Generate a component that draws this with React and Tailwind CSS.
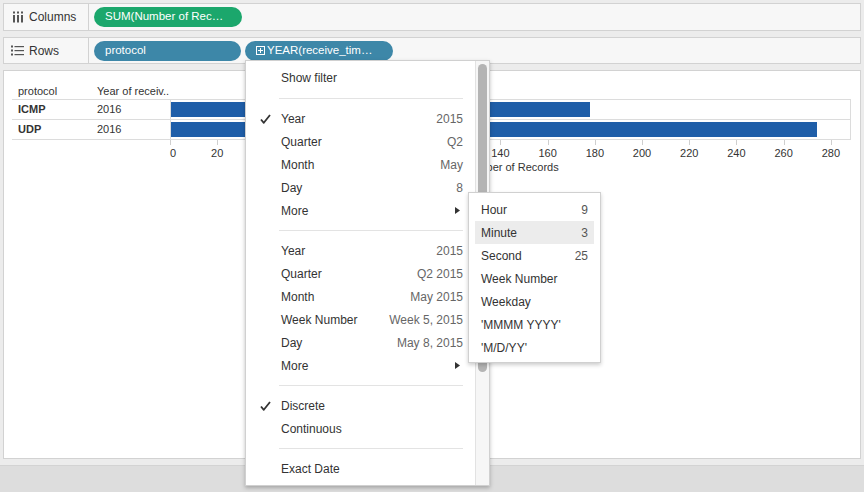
import React from 'react';

const font = "font-['Liberation_Sans',Arial,sans-serif]";

const rows = [
  { protocol: 'ICMP', year: '2016', records: 177.5 },
  { protocol: 'UDP', year: '2016', records: 273.8 },
];

const ticks = [0, 20, 40, 60, 80, 100, 120, 140, 160, 180, 200, 220, 240, 260, 280];
const PX_PER_UNIT = 2.36;

const ColumnsIcon = () => (
  <svg width="12" height="12" viewBox="0 0 12 12" className="text-[#555]">
    <rect x="1" y="0.5" width="2" height="2" fill="currentColor" />
    <rect x="5" y="0.5" width="2" height="2" fill="currentColor" />
    <rect x="9" y="0.5" width="2" height="2" fill="currentColor" />
    <rect x="1" y="4" width="2" height="7.5" fill="currentColor" />
    <rect x="5" y="4" width="2" height="7.5" fill="currentColor" />
    <rect x="9" y="4" width="2" height="7.5" fill="currentColor" />
  </svg>
);

const RowsIcon = () => (
  <svg width="13" height="11" viewBox="0 0 13 11" className="text-[#555]">
    <rect x="0" y="0.5" width="2" height="2" fill="currentColor" />
    <rect x="0" y="4.5" width="2" height="2" fill="currentColor" />
    <rect x="0" y="8.5" width="2" height="2" fill="currentColor" />
    <rect x="3.5" y="1" width="9.5" height="1.2" fill="currentColor" />
    <rect x="3.5" y="5" width="9.5" height="1.2" fill="currentColor" />
    <rect x="3.5" y="9" width="9.5" height="1.2" fill="currentColor" />
  </svg>
);

const PlusBox = () => (
  <svg width="9" height="9" viewBox="0 0 9 9" className="mr-[2px] shrink-0">
    <rect x="0.5" y="0.5" width="8" height="8" fill="none" stroke="white" strokeWidth="1" />
    <path d="M2 4.5h5M4.5 2v5" stroke="white" strokeWidth="1" />
  </svg>
);

const Check = () => (
  <svg width="11" height="10" viewBox="0 0 11 10" className="absolute left-[14px] top-[7px]">
    <path d="M1 5.5 L3.8 8.8 L10 1" fill="none" stroke="#333" strokeWidth="1.8" strokeLinejoin="round" />
  </svg>
);

const Arrow = () => (
  <svg width="5" height="7" viewBox="0 0 5 7">
    <path d="M0 0 L5 3.5 L0 7 Z" fill="#333" />
  </svg>
);

const Pill = ({ color, width, children }) => (
  <div className={`${color} ${width} h-[20px] rounded-full flex items-center px-[11px] text-white text-[11.5px] whitespace-nowrap overflow-hidden`}>
    {children}
  </div>
);

const MenuItem = ({ label, value, checked, more }) => (
  <div className="relative h-[23px] flex items-center justify-between pl-[35px] pr-[12px]">
    {checked && <Check />}
    <span className="text-[#333]">{label}</span>
    {value && <span className="text-[#666]">{value}</span>}
    {more && <span className="mr-[3px] flex"><Arrow /></span>}
  </div>
);

const Sep = ({ tight }) => (
  <div className={`${tight ? 'mt-[8px]' : 'mt-[9px]'} mb-[8px] ml-[33px] mr-[12px] h-px bg-[#e3e3e3]`} />
);

const SubItem = ({ label, value, active }) => (
  <div className={`h-[23px] mx-[6px] px-[6px] flex items-center justify-between ${active ? 'bg-[#ececec]' : ''}`}>
    <span className="text-[#333]">{label}</span>
    {value && <span className="text-[#555]">{value}</span>}
  </div>
);

export default function App() {
  return (
    <div className={`${font} relative w-[864px] h-[492px] bg-[#ececec] overflow-hidden text-[12px] text-[#333]`}>
      <div className="px-[3px] pt-[3px]">
        {/* Columns shelf */}
        <div className="h-[28px] border border-[#d2d2d2] bg-[#f7f7f7] flex items-center">
          <div className="w-[85px] h-full border-r border-[#d2d2d2] flex items-center gap-[5px] pl-[8px]">
            <ColumnsIcon />
            <span>Columns</span>
          </div>
          <div className="ml-[5px]">
            <Pill color="bg-[#1ba76c]" width="w-[148px]">SUM(Number of Rec…</Pill>
          </div>
        </div>

        {/* Rows shelf */}
        <div className="mt-[6px] h-[27px] border border-[#d2d2d2] bg-[#f7f7f7] flex items-center">
          <div className="w-[85px] h-full border-r border-[#d2d2d2] flex items-center gap-[5px] pl-[7px]">
            <RowsIcon />
            <span>Rows</span>
          </div>
          <div className="ml-[5px] flex gap-[4px]">
            <Pill color="bg-[#3d87a8]" width="w-[147px]">protocol</Pill>
            <Pill color="bg-[#3d87a8]" width="w-[148px]">
              <PlusBox />
              YEAR(receive_tim…
            </Pill>
          </div>
        </div>

        {/* View */}
        <div className="mt-[6px] h-[389px] border border-[#d2d2d2] bg-white pl-[8px] pt-[12px] text-[11px]">
          <div className="flex h-[16px] items-center">
            <div className="w-[85px] pl-[6px]">protocol</div>
            <div className="w-[73px]">Year of receiv..</div>
          </div>
          <div className="w-[839px] border-t border-[#dcdcdc]">
            {rows.map((r) => (
              <div key={r.protocol} className="flex h-[20px] border-b border-[#dcdcdc]">
                <div className="w-[85px] pl-[6px] flex items-center font-bold">{r.protocol}</div>
                <div className="w-[73px] flex items-center">{r.year}</div>
                <div className="flex-1 border-l border-r border-[#dcdcdc] flex items-center">
                  <div className="h-[15px] bg-[#1f5ea8]" style={{ width: r.records * PX_PER_UNIT }} />
                </div>
              </div>
            ))}
          </div>
          <div className="ml-[158px] w-[662px] flex justify-between">
            {ticks.map((t) => (
              <div key={t} className="w-px h-[5px] bg-[#cfcfcf]" />
            ))}
          </div>
          <div className="ml-[143px] w-[691px] flex justify-between mt-[2px]">
            {ticks.map((t) => (
              <div key={t} className={`w-[30px] leading-[13px] ${t === 0 ? 'text-center pl-[6px]' : 'text-center'}`}>{t}</div>
            ))}
          </div>
          <div className="ml-[159px] w-[680px] text-center mt-[1px] leading-[13px]">Number of Records</div>
        </div>
      </div>

      {/* Status bar */}
      <div className="mt-[6px] h-[27px] bg-[#dddddd] border-t border-[#d3d3d3]" />

      {/* Context menu */}
      <div className="absolute left-[245px] top-[60px] w-[245px] h-[426px] bg-white border border-[#d0d0d0] shadow-[0_2px_4px_rgba(0,0,0,0.25)] flex">
        <div className="flex-1 pt-[5px]">
          <MenuItem label="Show filter" />
          <Sep />
          <MenuItem label="Year" value="2015" checked />
          <MenuItem label="Quarter" value="Q2" />
          <MenuItem label="Month" value="May" />
          <MenuItem label="Day" value="8" />
          <MenuItem label="More" more />
          <Sep tight />
          <MenuItem label="Year" value="2015" />
          <MenuItem label="Quarter" value="Q2 2015" />
          <MenuItem label="Month" value="May 2015" />
          <MenuItem label="Week Number" value="Week 5, 2015" />
          <MenuItem label="Day" value="May 8, 2015" />
          <MenuItem label="More" more />
          <Sep tight />
          <MenuItem label="Discrete" checked />
          <MenuItem label="Continuous" />
          <Sep tight />
          <MenuItem label="Exact Date" />
        </div>
        <div className="w-[14px] border-l border-[#e2e2e2] bg-[#f6f6f6] pt-[3px] flex justify-center">
          <div className="w-[9px] h-[308px] rounded-full bg-[#b4b4b4]" />
        </div>
      </div>

      {/* Submenu */}
      <div className="absolute left-[468px] top-[192px] w-[133px] h-[171px] bg-white border border-[#d0d0d0] shadow-[0_2px_4px_rgba(0,0,0,0.2)] pt-[5px]">
        <SubItem label="Hour" value="9" />
        <SubItem label="Minute" value="3" active />
        <SubItem label="Second" value="25" />
        <SubItem label="Week Number" />
        <SubItem label="Weekday" />
        <SubItem label="'MMMM YYYY'" />
        <SubItem label="'M/D/YY'" />
      </div>
    </div>
  );
}
